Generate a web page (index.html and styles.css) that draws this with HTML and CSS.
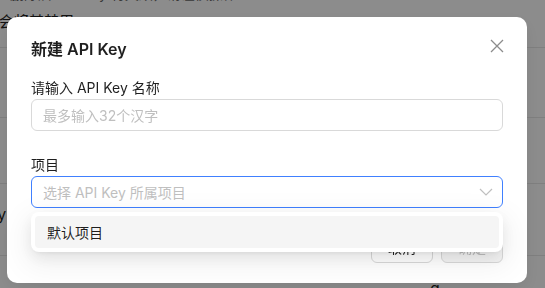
FILE: index.html
```html
<!DOCTYPE html>
<html lang="zh-CN">
<head>
  <meta charset="UTF-8">
  <meta name="viewport" content="width=device-width, initial-scale=1.0">
  <title>新建 API Key</title>
  <link rel="stylesheet" href="styles.css">
</head>
<body>
  <div class="page">
    <div class="row row-top">
      <div class="faint">删除后 API Key 将失效，请谨慎操作</div>
      <div class="note">会将其禁用</div>
    </div>
    <div class="row row-a"></div>
    <div class="row row-b"></div>
    <div class="row row-c"><span class="cut">Key</span></div>
    <div class="row row-d"><span class="tail">g</span></div>
  </div>

  <div class="mask"></div>

  <div class="modal">
    <div class="modal-header">
      <h2>新建 API Key</h2>
      <button class="close" aria-label="关闭">
        <svg width="14" height="14" viewBox="0 0 14 14">
          <path d="M1 1 L13 13 M13 1 L1 13" stroke="#8c8c8c" stroke-width="1.3" fill="none"/>
        </svg>
      </button>
    </div>

    <div class="form-item">
      <label for="name">请输入 API Key 名称</label>
      <input type="text" id="name" placeholder="最多输入32个汉字">
    </div>

    <div class="form-item">
      <label>项目</label>
      <div class="select">
        <span class="placeholder">选择 API Key 所属项目</span>
        <svg class="chevron" width="14" height="8" viewBox="0 0 14 8">
          <path d="M1 1 L7 7 L13 1" stroke="#bfbfbf" stroke-width="1.2" fill="none"/>
        </svg>
        <div class="dropdown">
          <div class="option">默认项目</div>
        </div>
      </div>
    </div>

    <div class="modal-footer">
      <button class="btn">取消</button>
      <button class="btn btn-disabled">确定</button>
    </div>
  </div>
</body>
</html>
```

FILE: styles.css
```css
body {
  margin: 0;
  font-family: Inter, "Noto Sans CJK SC", sans-serif;
  background: #fff;
  color: rgba(0,0,0,0.88);
  font-size: 14px;
  overflow: hidden;
}
.page {
  width: 545px;
  height: 288px;
}
.row {
  border-bottom: 1px solid #e8e8e8;
  box-sizing: border-box;
}
.row-top {
  height: 48px;
  position: relative;
}
.faint {
  position: absolute;
  top: -17px;
  left: 10px;
  color: #666;
}
.note {
  position: absolute;
  top: 10px;
  left: -1px;
  font-size: 15px;
  color: #222;
}
.row-a { height: 70px; }
.row-b { height: 66px; }
.row-c {
  height: 72px;
  padding-top: 20px;
  font-size: 16px;
}
.cut {
  display: inline-block;
  margin-left: -22px;
}
.row-d {
  height: 40px;
  position: relative;
}
.tail {
  position: absolute;
  left: 430px;
  top: 22px;
  font-size: 16px;
}
.mask {
  position: fixed;
  inset: 0;
  background: rgba(0,0,0,0.45);
}
.modal {
  position: fixed;
  top: 17px;
  left: 7px;
  width: 520px;
  box-sizing: border-box;
  padding: 20px 24px 20px;
  background: #fff;
  border-radius: 10px;
  box-shadow: 0 6px 16px rgba(0,0,0,0.08);
}
.modal-header {
  display: flex;
  justify-content: space-between;
  align-items: center;
  margin-bottom: 16px;
}
.modal-header h2 {
  margin: 0;
  font-size: 16px;
  font-weight: 600;
  line-height: 24px;
  color: rgba(0,0,0,0.88);
}
.close {
  border: none;
  background: none;
  padding: 0;
  margin-right: -2px;
  margin-top: -6px;
  width: 16px;
  height: 16px;
  display: flex;
  align-items: center;
  justify-content: center;
}
.form-item {
  margin-bottom: 23px;
}
.form-item label {
  display: block;
  line-height: 22px;
  color: rgba(0,0,0,0.88);
}
.form-item input,
.select {
  display: block;
  width: 100%;
  height: 32px;
  box-sizing: border-box;
  border: 1px solid #d9d9d9;
  border-radius: 6px;
  padding: 0 11px;
  font-family: inherit;
  font-size: 14px;
  background: #fff;
}
.form-item input::placeholder,
.placeholder {
  color: #bfbfbf;
}
.select {
  position: relative;
  border-color: #4080ff;
  display: flex;
  align-items: center;
  justify-content: space-between;
}
.chevron {
  margin-right: -2px;
}
.dropdown {
  position: absolute;
  top: 35px;
  left: -1px;
  right: -1px;
  padding: 4px;
  background: #fff;
  border-radius: 8px;
  box-shadow: 0 6px 16px rgba(0,0,0,0.08), 0 3px 6px -4px rgba(0,0,0,0.12), 0 9px 28px 8px rgba(0,0,0,0.05);
  z-index: 2;
}
.option {
  height: 32px;
  line-height: 33px;
  padding: 0 12px;
  background: #f5f5f5;
  border-radius: 4px;
  color: rgba(0,0,0,0.88);
}
.modal-footer {
  display: flex;
  justify-content: flex-end;
  gap: 8px;
  margin-top: 2px;
}
.btn {
  height: 32px;
  padding: 0 16px;
  border: 1px solid #d9d9d9;
  border-radius: 6px;
  background: #fff;
  font-family: inherit;
  font-size: 14px;
  color: rgba(0,0,0,0.88);
}
.btn-disabled {
  background: #f5f5f5;
  color: #bfbfbf;
}
```
